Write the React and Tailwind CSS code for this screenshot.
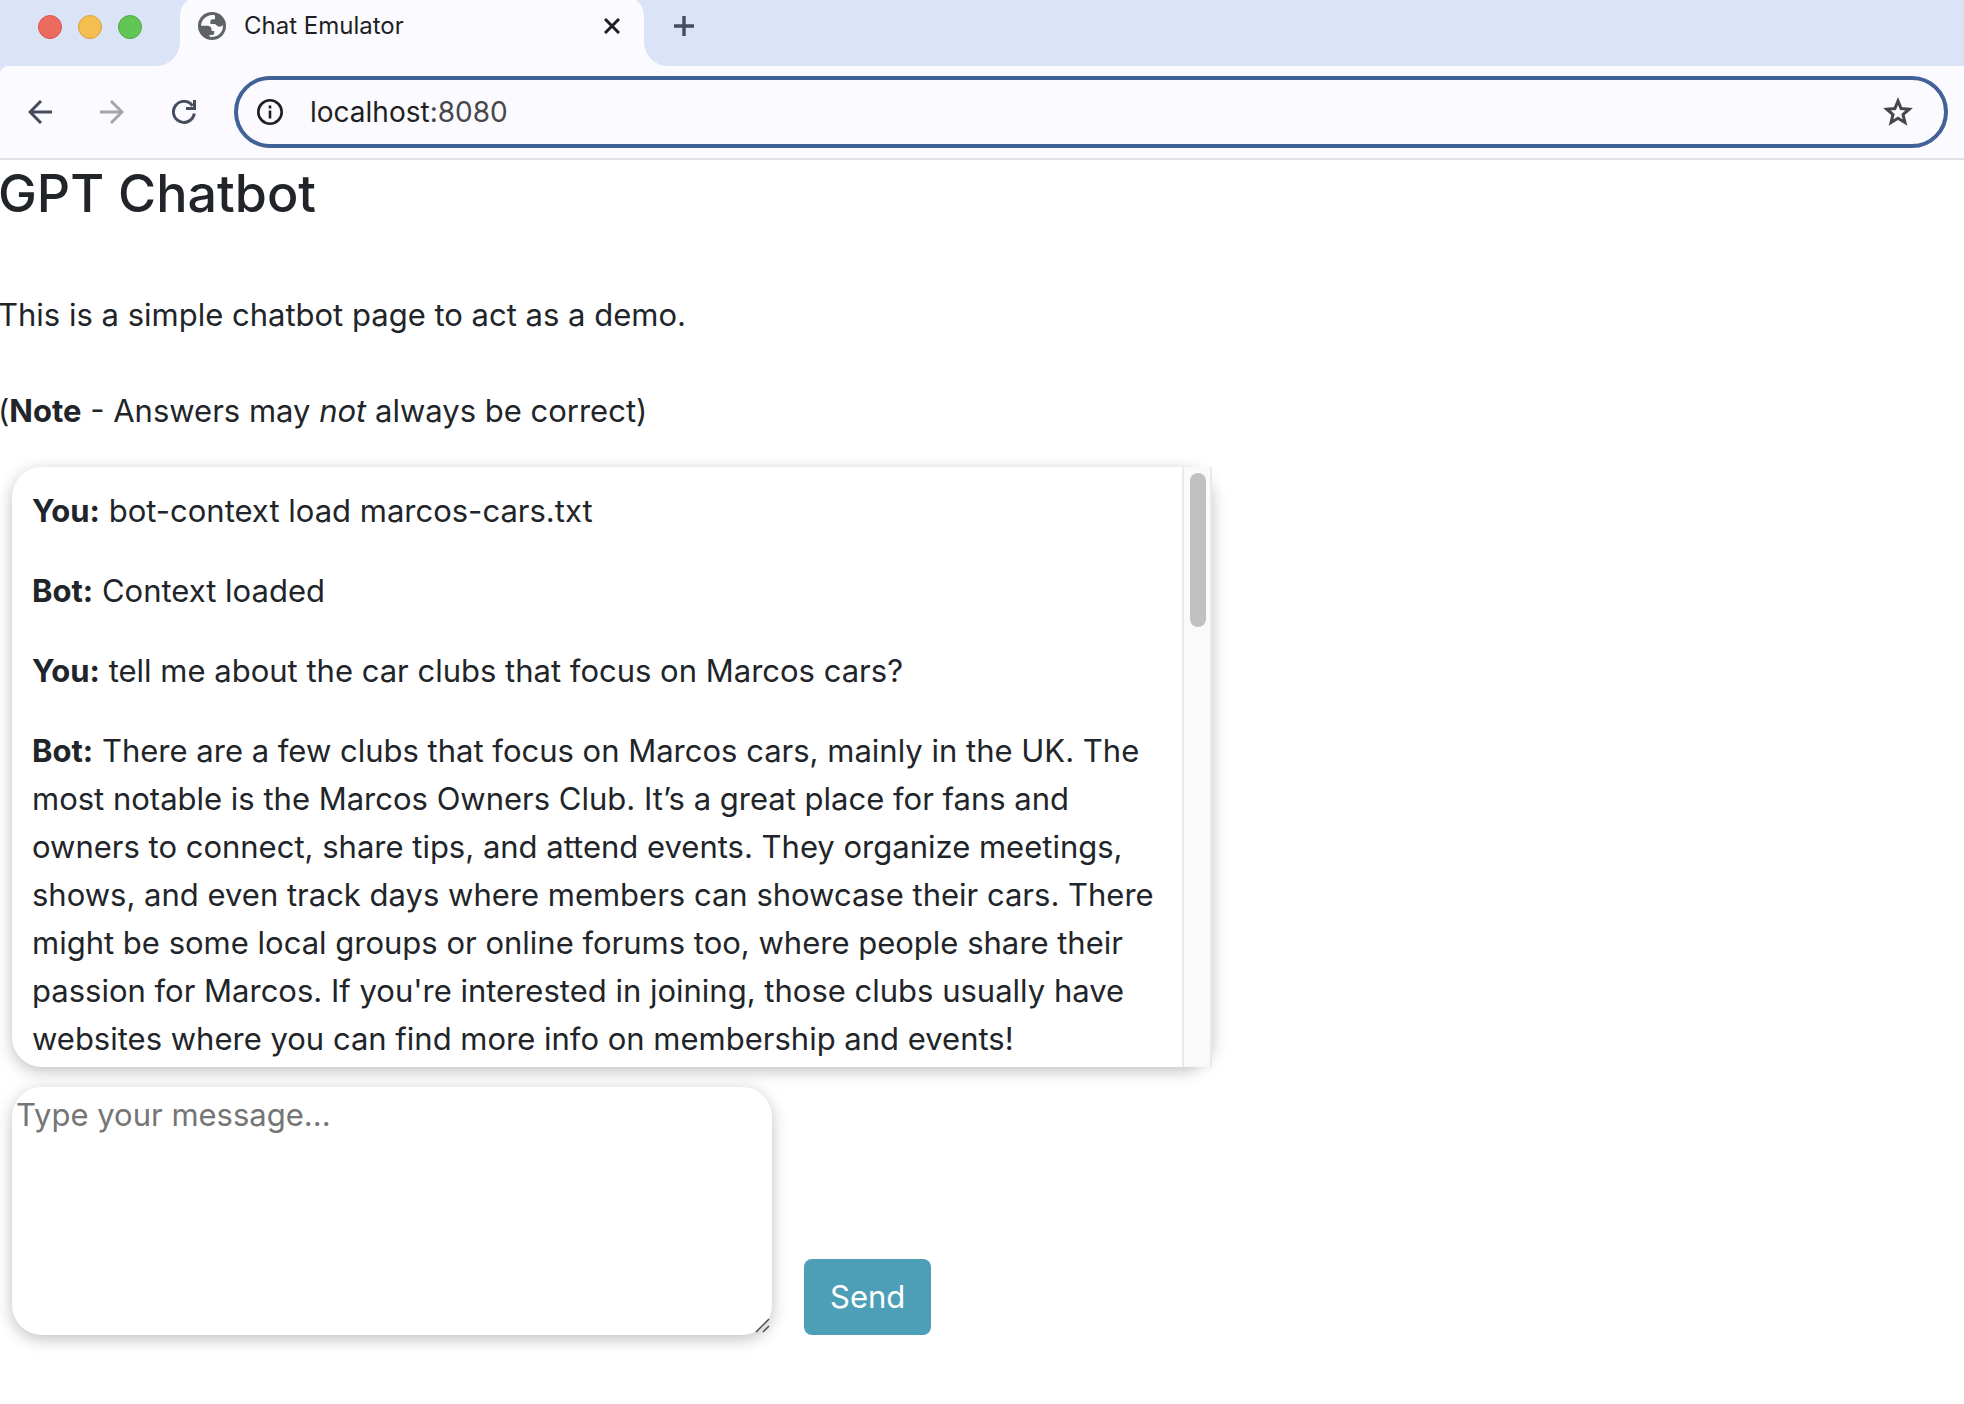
const messages = [
  { who: 'You:', text: 'bot-context load marcos-cars.txt' },
  { who: 'Bot:', text: 'Context loaded' },
  { who: 'You:', text: 'tell me about the car clubs that focus on Marcos cars?' },
  {
    who: 'Bot:',
    text: "There are a few clubs that focus on Marcos cars, mainly in the UK. The most notable is the Marcos Owners Club. It’s a great place for fans and owners to connect, share tips, and attend events. They organize meetings, shows, and even track days where members can showcase their cars. There might be some local groups or online forums too, where people share their passion for Marcos. If you're interested in joining, those clubs usually have websites where you can find more info on membership and events!",
  },
];

function GlobeIcon() {
  return (
    <svg viewBox="0 0 28 28" className="size-7 shrink-0" aria-hidden="true">
      <circle cx="14" cy="14" r="14" fill="#5f6368" />
      <path
        d="M17 3.4 C14.5 2.5 9 3 5.6 7 C3.8 9.2 3 12 3.1 13.8 L9 13.8 C12 13.8 13.6 15.4 13.6 17.6 L13.6 18.9 L16.2 18.9 L16.2 21.2 C16.2 22.4 15.3 23 14.2 23 L11.4 23 L11.4 24.6 C16 25.8 20.4 24 22.9 20.6 C24.6 18.4 25.2 15.6 24.8 13 C23.6 14.6 22.4 14.9 20.6 14.6 C18.6 14.2 18.2 12.6 16.6 12 L12.4 12 L12.4 9.6 C12.4 8.2 13.3 7.2 14.7 7.2 L17 7.2 Z"
        fill="#fafaff"
      />
    </svg>
  );
}

function TabStrip() {
  return (
    <div className="flex h-[66px] bg-[#fafaff]">
      <div className="flex w-[180px] shrink-0 gap-4 rounded-br-[24px] bg-[#dbe3f6] pt-[15px] pl-[38px]">
        <span className="size-6 rounded-full border border-[#d9574b] bg-[#ec6b5f]" />
        <span className="size-6 rounded-full border border-[#dba13a] bg-[#f4bf50]" />
        <span className="size-6 rounded-full border border-[#50a93d] bg-[#61c655]" />
      </div>
      <div className="w-[464px] shrink-0 overflow-hidden bg-[#dbe3f6]">
        <div className="-mt-1 flex h-[70px] items-start rounded-t-[20px] bg-[#fafaff] pt-4 pr-6 pl-[18px]">
          <GlobeIcon />
          <span className="ml-[18px] grow text-2xl leading-7 text-[#1f1f23]">Chat Emulator</span>
          <button type="button" aria-label="Close tab" className="mt-1.5">
            <svg viewBox="0 0 16 16" className="size-4" fill="none" stroke="#1f1f23" strokeWidth="3">
              <path d="M1 1l14 14M15 1L1 15" />
            </svg>
          </button>
        </div>
      </div>
      <div className="grow rounded-bl-[24px] bg-[#dbe3f6] pt-4 pl-[30px]">
        <button type="button" aria-label="New tab" className="block">
          <svg viewBox="0 0 20 20" className="size-5" fill="none" stroke="#454c5e" strokeWidth="3.4">
            <path d="M10 0v20M0 10h20" />
          </svg>
        </button>
      </div>
    </div>
  );
}

function Toolbar() {
  return (
    <div className="bg-[#dbe3f6]">
      <div className="flex items-center rounded-tl-lg border-b-2 border-[#dde1ea] bg-[#fafaff] py-2.5 pr-4 pl-7">
        <button type="button" aria-label="Back">
          <svg viewBox="0 0 24 24" className="size-6" fill="none" stroke="#454c5e" strokeWidth="3">
            <path d="M24 12H2M13 1L2 12l11 11" />
          </svg>
        </button>
        <button type="button" aria-label="Forward" className="ml-12">
          <svg viewBox="0 0 24 24" className="size-6" fill="none" stroke="#a5a5aa" strokeWidth="3">
            <path d="M0 12h22M11 1l11 11-11 11" />
          </svg>
        </button>
        <button type="button" aria-label="Reload" className="ml-12">
          <svg viewBox="0 0 24 24" className="size-6" fill="none" stroke="#454c5e" strokeWidth="3">
            <path d="M22.300 13.500A10.500 10.500 0 1 1 20.500 5.800" />
            <path d="M22.500 0v8.500H14" />
          </svg>
        </button>
        <div className="ml-[38px] flex h-[72px] grow items-center rounded-full border-4 border-[#416297] pr-[31px] pl-[19px]">
          <svg viewBox="0 0 26 26" className="size-[26px] shrink-0" fill="none" stroke="#1f1f23" strokeWidth="2.600" aria-hidden="true">
            <circle cx="13" cy="13" r="11.700" />
            <path d="M13 11.500v8M13 6.500v3" />
          </svg>
          <a href="http://localhost:8080" className="ml-[27px] grow text-[28px] leading-8 text-[#1f1f23]">
            localhost<span className="text-[#47474b]">:8080</span>
          </a>
          <button type="button" aria-label="Bookmark this tab">
            <svg viewBox="0 0 30 30" className="size-[30px]" fill="none" stroke="#47474b" strokeWidth="3">
              <path d="M15 4l3.100 7.600 8.100.6-6.200 5.300 2 8L15 21.200 8 25.500l2-8-6.200-5.300 8.100-.6z" />
            </svg>
          </button>
        </div>
      </div>
    </div>
  );
}

function ChatLog() {
  return (
    <section
      aria-label="Conversation"
      className="flex h-[600px] max-w-[1200px] rounded-[30px] bg-white shadow-[0_4px_16px_rgba(0,0,0,0.25)]"
    >
      <div className="grow overflow-hidden p-5">
        {messages.map((m, i) => (
          <p key={i} className="mb-8">
            <strong>{m.who}</strong> {m.text}
          </p>
        ))}
      </div>
      <div className="w-[30px] shrink-0 border-x-2 border-[#e9e9e9] bg-[#fafafa] pt-1.5 pl-1.5">
        <div className="h-[154px] w-4 rounded-full bg-[#c1c1c1]" />
      </div>
    </section>
  );
}

function Composer() {
  return (
    <form className="mt-5 flex items-end gap-8" onSubmit={(e) => e.preventDefault()}>
      <div className="relative w-[760px]">
        <textarea
          aria-label="Message"
          placeholder="Type your message..."
          className="block h-[248px] w-full resize-none rounded-[30px] bg-white px-1 py-1 shadow-[0_4px_16px_rgba(0,0,0,0.25)] placeholder:text-[#757575]"
        />
        <svg
          viewBox="0 0 16 16"
          className="pointer-events-none absolute right-0.5 bottom-0.5 size-4"
          fill="none"
          stroke="#4a4a4a"
          strokeWidth="1.500"
          aria-hidden="true"
        >
          <path d="M2 15L15 2M9 15l6-6" />
        </svg>
      </div>
      <button type="submit" className="rounded-lg bg-[#4c9fb6] px-[26px] py-3.5 text-white">
        Send
      </button>
    </form>
  );
}

export default function App() {
  return (
    <div className="min-h-screen bg-white font-['Inter',sans-serif]">
      <header>
        <TabStrip />
        <Toolbar />
      </header>
      <main className="text-[31px] leading-[48px] text-[#212529]">
        <div className="-ml-0.5">
          <h1 className="text-[52px] leading-[67px] font-medium">GPT Chatbot</h1>
          <p className="mt-16">This is a simple chatbot page to act as a demo.</p>
          <p className="mt-12 mb-8">
            (<strong>Note</strong> - Answers may <em>not</em> always be correct)
          </p>
        </div>
        <div className="px-3">
          <ChatLog />
          <Composer />
        </div>
      </main>
    </div>
  );
}
